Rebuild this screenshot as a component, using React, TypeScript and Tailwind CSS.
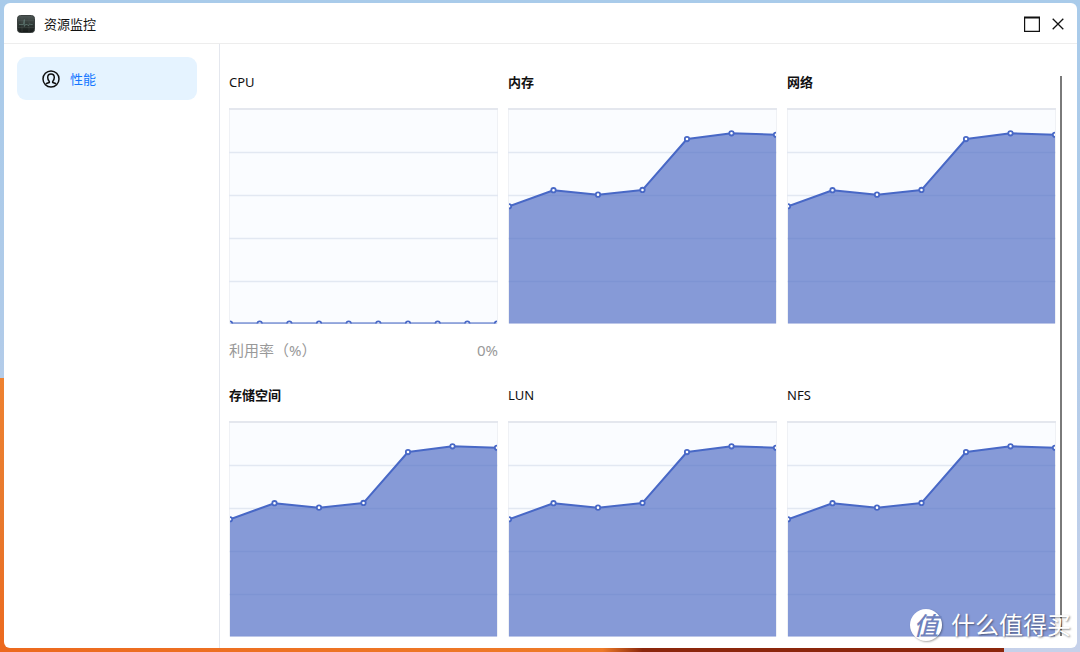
import React from "react";
import clsx from "clsx";

const TREND = [820, 932, 901, 934, 1290, 1330, 1320];
const IDLE = [0, 0, 0, 0, 0, 0, 0, 0, 0, 0];

const PLOT = { width: 269, height: 216, max: 1500 };

interface Monitor {
  id: string;
  title: string;
  values: number[];
  latin?: boolean;
  label?: string;
  usage?: string;
}

const MONITORS: Monitor[] = [
  { id: "cpu", title: "CPU", latin: true, values: IDLE, label: "利用率（%）", usage: "0%" },
  { id: "memory", title: "内存", values: TREND },
  { id: "network", title: "网络", values: TREND },
  { id: "storage", title: "存储空间", values: TREND },
  { id: "lun", title: "LUN", latin: true, values: TREND },
  { id: "nfs", title: "NFS", latin: true, values: TREND },
];

function AreaChart({ id, values }: { id: string; values: number[] }) {
  const { width, height, max } = PLOT;
  const bottom = height - 0.5;
  const points = values.map((v, i) => ({
    x: 1 + (i * (width - 2)) / (values.length - 1),
    y: bottom - (v / max) * (bottom - 1),
  }));
  const line = points.map((p) => `${p.x},${p.y}`).join(" ");

  return (
    <svg viewBox={`0 0 ${width} ${height}`} className="block w-full" aria-hidden="true">
      <clipPath id={`plot-${id}`}>
        <rect x="1" y="0" width={width - 2} height={bottom} />
      </clipPath>
      <rect x="0.5" y="1" width={width - 1} height={bottom - 1.5} fill="#fafcff" stroke="#eff1f5" />
      <line x1="0" x2={width} y1="1" y2="1" stroke="#e4e7ee" strokeWidth="2" />
      {[1, 2, 3, 4].map((i) => (
        <line key={i} x1="0" x2={width} y1={1.5 + i * 43} y2={1.5 + i * 43} stroke="#e2e8f2" strokeWidth="1.4" />
      ))}
      <g clipPath={`url(#plot-${id})`}>
        <polygon points={`1,${bottom + 1} ${line} ${width - 1},${bottom + 1}`} fill="#5470c6" fillOpacity="0.7" />
        <polyline points={line} fill="none" stroke="#4868c6" strokeWidth="2" strokeLinejoin="bevel" />
        {points.map((p) => (
          <circle key={p.x} cx={p.x} cy={p.y} r="2.2" fill="#fff" stroke="#4868c6" strokeWidth="1.8" />
        ))}
      </g>
    </svg>
  );
}

function MonitorCard({ monitor }: { monitor: Monitor }) {
  return (
    <section>
      <h2 className={clsx("mb-4 text-[13px] leading-5 text-[#111]", monitor.latin ? "font-normal" : "font-bold")}>
        {monitor.title}
      </h2>
      <AreaChart id={monitor.id} values={monitor.values} />
      {monitor.label && (
        <div className="mt-[15px] flex justify-between text-[15px] leading-[22px] text-[#999]">
          <span>{monitor.label}</span>
          <span>{monitor.usage}</span>
        </div>
      )}
    </section>
  );
}

function AppIcon() {
  return (
    <svg viewBox="0 0 18 18" className="size-[18px]" aria-hidden="true">
      <defs>
        <linearGradient id="app-icon" x1="0" y1="0" x2="0" y2="1">
          <stop offset="0" stopColor="#4d5654" />
          <stop offset="0.5" stopColor="#303936" />
          <stop offset="1" stopColor="#151918" />
        </linearGradient>
      </defs>
      <rect x="0.5" y="0.5" width="17" height="17" rx="3" fill="url(#app-icon)" stroke="#3a403f" />
      <path d="M1 5.5h16M1 12.5h16M5 1v16M12 1v16" stroke="#59645f" strokeWidth="0.3" />
      <path d="M2 9.500h4.500l.8-5v7l1.200-2h1.800l1 1.300 1.400-2 1 .7h2" fill="none" stroke="#66807a" strokeWidth="0.7" />
    </svg>
  );
}

function UserIcon() {
  return (
    <svg viewBox="0 0 18 18" className="size-[18px]" fill="none" stroke="#111" strokeWidth="1.5" aria-hidden="true">
      <circle cx="9" cy="9" r="8" />
      <path d="M4 14.100c.6-.8 1.600-1.100 2.600-1.300.9-.2 1-.9.500-1.600C6.200 10.100 5.700 8.900 5.700 7.600c0-2.100 1.300-3.500 3.300-3.500s3.300 1.400 3.300 3.500c0 1.300-.5 2.500-1.400 3.600-.5.700-.4 1.400.5 1.600 1 .2 2 .5 2.600 1.300" />
    </svg>
  );
}

// Desktop behind the window: sky with the orange ribbons of the wallpaper
function Wallpaper() {
  return (
    <div className="absolute inset-0 -z-10 bg-linear-to-b from-[#a9cbea] via-[#b0cbe9] to-[#c6d1ea]">
      <div className="absolute top-[58%] bottom-0 left-0 w-1/2 bg-linear-to-b from-[#ee8130] via-[#e8792d] to-[#ec691e]" />
      <div className="absolute bottom-0 left-0 h-3 w-[93%] rounded-tr-lg bg-linear-to-r from-[#ec691e] from-0% via-[#ee7b28] via-60% to-[#8b260c] to-64%" />
    </div>
  );
}

function Watermark() {
  return (
    <div className="absolute right-[9px] bottom-[11px] flex items-center gap-[9px] text-white">
      <span className="flex size-8 items-center justify-center rounded-full bg-white text-[25px] leading-8 font-medium text-[#6f82bd] italic shadow-[1px_1px_2px_#0005]">
        值
      </span>
      <span className="text-[24px] leading-8 [text-shadow:1px_1px_2px_#0007]">什么值得买</span>
    </div>
  );
}

export default function App() {
  return (
    <div className="relative isolate h-screen overflow-hidden pt-[3px] pr-[3px] pb-1 pl-1 font-['Noto_Sans','Noto_Sans_CJK_SC',sans-serif] text-[#111]">
      <Wallpaper />
      <div className="flex h-full flex-col overflow-hidden rounded-md bg-white">
        <header className="flex h-[41px] shrink-0 items-center border-b border-[#ededed] pt-[2px] pr-[13px] pl-[13px]">
          <AppIcon />
          <h1 className="ml-[9px] flex-1 text-[13px] leading-5">资源监控</h1>
          <button type="button" aria-label="最大化" className="mr-3 flex size-4 items-center justify-center">
            <svg viewBox="0 0 16 16" className="size-4" fill="none" stroke="#111" aria-hidden="true">
              <path d="M.6 1v14.300h14.800V1" strokeWidth="1.200" />
              <path d="M0 1.500h16" strokeWidth="2" />
            </svg>
          </button>
          <button type="button" aria-label="关闭" className="flex size-3 items-center justify-center">
            <svg viewBox="0 0 12 12" className="size-3" stroke="#111" strokeWidth="1.300" aria-hidden="true">
              <path d="M.7.7l10.600 10.600M11.300.7L.7 11.300" />
            </svg>
          </button>
        </header>

        <div className="flex min-h-0 flex-1">
          <aside className="w-[216px] shrink-0 border-r border-[#e4e7ee] pt-[13px] pr-[22px] pl-[13px]">
            <nav>
              <a href="#performance" className="flex h-[43px] items-center gap-[10px] rounded-[9px] bg-[#e5f3ff] pl-[25px] text-[13px] leading-5 text-[#1677ff]">
                <UserIcon />
                性能
              </a>
            </nav>
          </aside>

          <main className="flex min-w-0 flex-1 overflow-hidden pr-[15px] pl-[9px]">
            <div className="grid flex-1 grid-cols-3 content-start gap-x-[10px] gap-y-6 pt-7">
              {MONITORS.map((monitor) => (
                <MonitorCard key={monitor.id} monitor={monitor} />
              ))}
            </div>
            <div className="mt-8 mb-3 ml-1 w-[2px] shrink-0 bg-[#7a7a7a]" />
          </main>
        </div>
      </div>
      <Watermark />
    </div>
  );
}
